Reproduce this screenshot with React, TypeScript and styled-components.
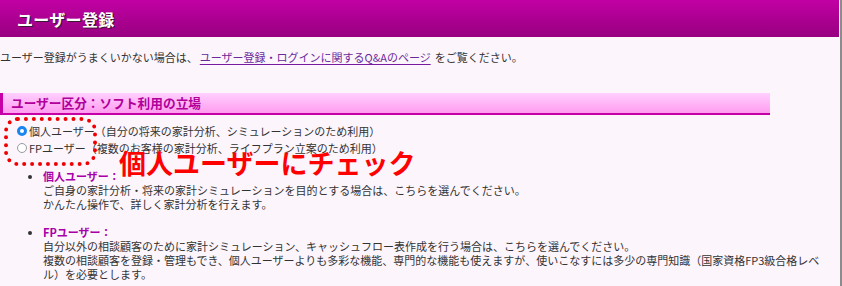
import React from 'react';
import styled, { createGlobalStyle } from 'styled-components';

const GlobalStyle = createGlobalStyle`
  html, body {
    margin: 0;
    padding: 0;
    background: #fcf5fc;
  }
  body {
    font-family: "Noto Sans CJK JP", "Noto Sans", sans-serif;
    color: #333;
  }
`

export const Page = styled.div`
  position: relative;
  width: 842px;
  height: 286px;
  box-sizing: border-box;
  padding-right: 1px;
  border-right: 2px solid #8c8c8c;
  background: #fcf5fc;
  overflow: hidden;
  font-size: 11px;
  line-height: 14px;
`

export const Header = styled.div`
  display: flex;
  align-items: center;
  height: 37px;
  padding-left: 17px;
  background: linear-gradient(#c200a4, #980080);
`

export const Title = styled.h1`
  margin: 0;
  font-size: 16px;
  font-weight: bold;
  color: #fff;
  text-shadow: 1px 1px 0 #3a1a30;
  letter-spacing: 0.3px;
`

export const Intro = styled.p`
  margin: 13px 0 0 0;
  display: flex;
  align-items: baseline;
  white-space: nowrap;
`

export const Link = styled.a`
  margin: 0 4px 0 2px;
  color: #6a2a9a;
  text-decoration: underline #7a1aa0;
  text-underline-offset: 2px;
`

export const SectionBar = styled.h2`
  display: flex;
  align-items: center;
  box-sizing: border-box;
  width: 770px;
  height: 22px;
  margin: 29px 0 0 0;
  padding-left: 8px;
  border-left: 3px solid #c600a6;
  border-bottom: 2px solid #c600a6;
  background: linear-gradient(#ffd0ff, #ff9cef);
  color: #b1009a;
  font-size: 12.7px;
  font-weight: bold;
`

export const RadioGroup = styled.div`
  margin-top: 7px;
  padding-left: 17px;
`

export const RadioRow = styled.label`
  display: flex;
  align-items: center;
  height: 17px;
  white-space: nowrap;
`

export const Radio = styled.span<{ $checked?: boolean }>`
  display: inline-block;
  box-sizing: border-box;
  width: 10px;
  height: 10px;
  margin-right: 2px;
  border-radius: 50%;
  border: ${p => (p.$checked ? '3px solid #1a85f0' : '1px solid #9a9a9a')};
  background: #fff;
`

export const List = styled.ul`
  margin: 13px 0 0 0;
  padding-left: 43px;
`

export const Item = styled.li`
  margin-bottom: 14px;
  &::marker {
    font-size: 10px;
  }
`

export const ItemLabel = styled.span`
  color: #a800a8;
  font-weight: bold;
`

export const Dotted = styled.div`
  position: absolute;
  left: 4px;
  top: 117px;
  width: 93px;
  height: 49px;
  box-sizing: border-box;
  border: 4px dotted #f00000;
  border-radius: 14px;
`

export const Callout = styled.div`
  position: absolute;
  left: 119px;
  top: 148px;
  color: #ff0000;
  font-size: 27px;
  font-weight: bold;
  line-height: 30px;
  white-space: nowrap;
`

const App = () => {
  return (
    <>
      <GlobalStyle />
      <Page>
        <Header>
          <Title>ユーザー登録</Title>
        </Header>
        <Intro>
          ユーザー登録がうまくいかない場合は、
          <Link href="#">ユーザー登録・ログインに関するQ&amp;Aのページ</Link>
          をご覧ください。
        </Intro>
        <SectionBar>ユーザー区分：ソフト利用の立場</SectionBar>
        <RadioGroup>
          <RadioRow>
            <Radio $checked />
            個人ユーザー（自分の将来の家計分析、シミュレーションのため利用）
          </RadioRow>
          <RadioRow>
            <Radio />
            FPユーザー（複数のお客様の家計分析、ライフプラン立案のため利用）
          </RadioRow>
        </RadioGroup>
        <List>
          <Item>
            <ItemLabel>個人ユーザー：</ItemLabel>
            <br />
            ご自身の家計分析・将来の家計シミュレーションを目的とする場合は、こちらを選んでください。
            <br />
            かんたん操作で、詳しく家計分析を行えます。
          </Item>
          <Item>
            <ItemLabel>FPユーザー：</ItemLabel>
            <br />
            自分以外の相談顧客のために家計シミュレーション、キャッシュフロー表作成を行う場合は、こちらを選んでください。
            <br />
            複数の相談顧客を登録・管理もでき、個人ユーザーよりも多彩な機能、専門的な機能も使えますが、使いこなすには多少の専門知識（国家資格FP3級合格レベ
            <br />
            ル）を必要とします。
          </Item>
        </List>
        <Dotted />
        <Callout>個人ユーザーにチェック</Callout>
      </Page>
    </>
  );
};

export default App;
